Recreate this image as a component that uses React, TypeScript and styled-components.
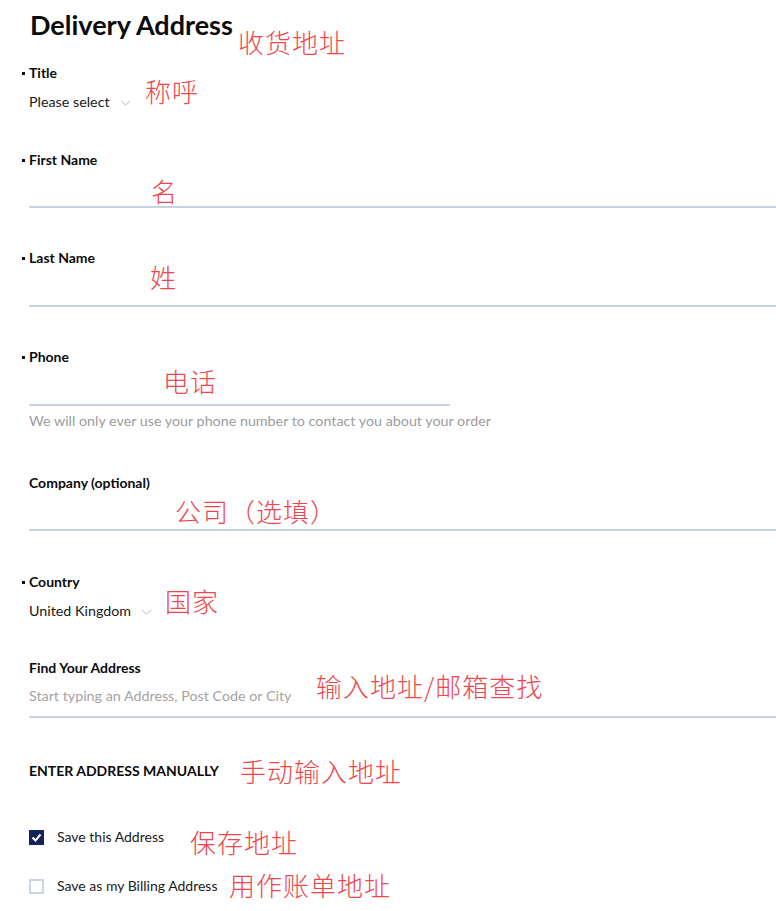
import { createGlobalStyle } from 'styled-components';
import styled from 'styled-components';

const GlobalStyle = createGlobalStyle`
  html, body {
    margin: 0;
    padding: 0;
    background: #ffffff;
  }
  body {
    font-family: Lato, 'Liberation Sans', sans-serif;
    color: #111111;
  }
`;

type Note = { text: string; x: number; y: number };

const notes: Note[] = [
  { text: '收货地址', x: 238, y: 26 },
  { text: '称呼', x: 145, y: 75 },
  { text: '名', x: 151, y: 175 },
  { text: '姓', x: 150, y: 261 },
  { text: '电话', x: 163, y: 365 },
  { text: '公司（选填）', x: 175, y: 495 },
  { text: '国家', x: 165, y: 585 },
  { text: '输入地址/邮箱查找', x: 316, y: 670 },
  { text: '手动输入地址', x: 240, y: 755 },
  { text: '保存地址', x: 190, y: 826 },
  { text: '用作账单地址', x: 229, y: 869 },
];

const Chevron = () => (
  <svg width="11" height="6" viewBox="0 0 11 6" fill="none">
    <path d="M1 1l4.5 4L10 1" stroke="#c5d3e3" strokeWidth="1.2" />
  </svg>
);

const Check = () => (
  <svg width="11" height="9" viewBox="0 0 11 9" fill="none">
    <path d="M1.5 4.5l3 3L9.5 1.5" stroke="#ffffff" strokeWidth="2" />
  </svg>
);

const App = () => {
  return (
    <Page>
      <GlobalStyle />
      <Heading>Delivery Address</Heading>

      <Field $top={24}>
        <Label $required>Title</Label>
        <SelectValue>
          Please select <Chevron />
        </SelectValue>
      </Field>

      <Field $top={40}>
        <Label $required>First Name</Label>
        <InputLine $height={39} />
      </Field>

      <Field $top={41}>
        <Label $required>Last Name</Label>
        <InputLine $height={40} />
      </Field>

      <Field $top={41}>
        <Label $required>Phone</Label>
        <InputLine $height={40} $width={421} />
        <Helper>We will only ever use your phone number to contact you about your order</Helper>
      </Field>

      <Field $top={44}>
        <Label>Company (optional)</Label>
        <InputLine $height={39} />
      </Field>

      <Field $top={42}>
        <Label $required>Country</Label>
        <SelectValue>
          United Kingdom <Chevron />
        </SelectValue>
      </Field>

      <Field $top={39}>
        <Label>Find Your Address</Label>
        <InputLine $height={41}>
          <Placeholder>Start typing an Address, Post Code or City</Placeholder>
        </InputLine>
      </Field>

      <ManualLink>ENTER ADDRESS MANUALLY</ManualLink>

      <CheckRow $top={48}>
        <Box $checked>
          <Check />
        </Box>
        <CheckLabel>Save this Address</CheckLabel>
      </CheckRow>

      <CheckRow $top={31}>
        <Box />
        <CheckLabel>Save as my Billing Address</CheckLabel>
      </CheckRow>

      {notes.map((n) => (
        <Annotation key={n.text} style={{ left: n.x, top: n.y }}>
          {n.text}
        </Annotation>
      ))}
    </Page>
  );
};

export default App;

const Page = styled.div`
  position: relative;
  width: 776px;
  height: 911px;
  overflow: hidden;
  padding: 10px 0 0 29px;
  box-sizing: border-box;
`;

const Heading = styled.h1`
  margin: 0 0 0 1px;
  font-size: 27px;
  line-height: 30px;
  font-weight: 700;
  color: #0b0b0b;
`;

const Field = styled.div<{ $top: number }>`
  display: flex;
  flex-direction: column;
  margin-top: ${(p) => p.$top}px;
`;

const Label = styled.div<{ $required?: boolean }>`
  position: relative;
  font-size: 14px;
  line-height: 18px;
  font-weight: 700;
  color: #0b0b0b;
  &::before {
    content: '';
    display: ${(p) => (p.$required ? 'block' : 'none')};
    position: absolute;
    left: -7px;
    top: 8px;
    width: 3px;
    height: 3px;
    background: #0b0b0b;
  }
`;

const SelectValue = styled.div`
  display: flex;
  align-items: center;
  gap: 10px;
  margin-top: 11px;
  font-size: 14.3px;
  line-height: 18px;
  color: #1a1a1a;
  svg {
    margin-top: 2px;
  }
`;

const InputLine = styled.div<{ $height: number; $width?: number }>`
  display: flex;
  align-items: flex-start;
  height: ${(p) => p.$height}px;
  width: ${(p) => (p.$width ? `${p.$width}px` : 'auto')};
  border-bottom: 2px solid #c5d3e3;
  box-sizing: border-box;
`;

const Placeholder = styled.span`
  margin-top: 10px;
  font-size: 14.3px;
  line-height: 18px;
  color: #a3a3a3;
`;

const Helper = styled.div`
  margin-top: 6px;
  font-size: 14.3px;
  line-height: 18px;
  color: #9d9d9d;
`;

const ManualLink = styled.div`
  margin-top: 44px;
  font-size: 14px;
  line-height: 18px;
  font-weight: 700;
  color: #0b0b0b;
`;

const CheckRow = styled.div<{ $top: number }>`
  display: flex;
  align-items: center;
  gap: 13px;
  margin-top: ${(p) => p.$top}px;
`;

const Box = styled.div<{ $checked?: boolean }>`
  display: flex;
  align-items: center;
  justify-content: center;
  width: 15px;
  height: 15px;
  box-sizing: border-box;
  background: ${(p) => (p.$checked ? '#14235a' : '#ffffff')};
  border: 2px solid ${(p) => (p.$checked ? '#14235a' : '#c9d6e6')};
`;

const CheckLabel = styled.span`
  font-size: 14px;
  line-height: 18px;
  color: #1a1a1a;
`;

const Annotation = styled.div`
  position: absolute;
  font-family: 'Noto Sans CJK SC', sans-serif;
  font-weight: 300;
  font-size: 26px;
  line-height: 32px;
  letter-spacing: 1px;
  color: #f0464b;
  white-space: nowrap;
`;
